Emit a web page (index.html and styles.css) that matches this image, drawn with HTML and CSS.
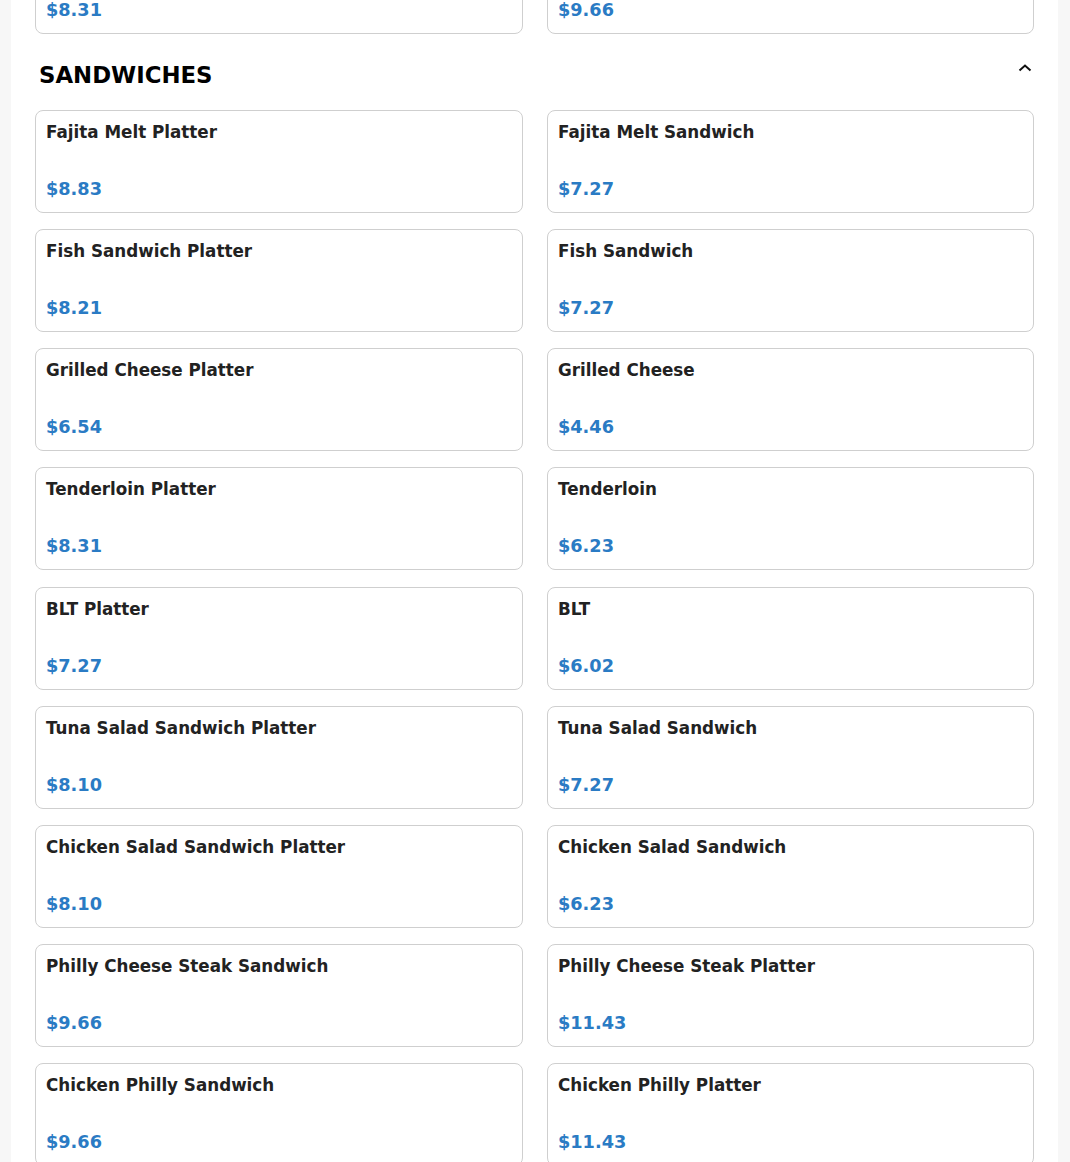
FILE: index.html
```html
<!DOCTYPE html>
<html>
<head>
<meta charset="utf-8">
<link rel="stylesheet" href="styles.css">
</head>
<body>
<div class="page">
  <div class="grid prev">
    <div class="card"><div class="name">Previous Item</div><div class="price">$8.31</div></div>
    <div class="card"><div class="name">Previous Item</div><div class="price">$9.66</div></div>
  </div>
  <section class="section">
    <div class="section-head">
      <h2>SANDWICHES</h2>
      <svg class="chev" width="14" height="10" viewBox="0 0 14 10"><path d="M1.5 7.5 L7 2.5 L12.5 7.5" fill="none" stroke="#111" stroke-width="2"/></svg>
    </div>
    <div class="grid">
      <div class="card"><div class="name">Fajita Melt Platter</div><div class="price">$8.83</div></div>
      <div class="card"><div class="name">Fajita Melt Sandwich</div><div class="price">$7.27</div></div>
      <div class="card"><div class="name">Fish Sandwich Platter</div><div class="price">$8.21</div></div>
      <div class="card"><div class="name">Fish Sandwich</div><div class="price">$7.27</div></div>
      <div class="card"><div class="name">Grilled Cheese Platter</div><div class="price">$6.54</div></div>
      <div class="card"><div class="name">Grilled Cheese</div><div class="price">$4.46</div></div>
      <div class="card"><div class="name">Tenderloin Platter</div><div class="price">$8.31</div></div>
      <div class="card"><div class="name">Tenderloin</div><div class="price">$6.23</div></div>
      <div class="card"><div class="name">BLT Platter</div><div class="price">$7.27</div></div>
      <div class="card"><div class="name">BLT</div><div class="price">$6.02</div></div>
      <div class="card"><div class="name">Tuna Salad Sandwich Platter</div><div class="price">$8.10</div></div>
      <div class="card"><div class="name">Tuna Salad Sandwich</div><div class="price">$7.27</div></div>
      <div class="card"><div class="name">Chicken Salad Sandwich Platter</div><div class="price">$8.10</div></div>
      <div class="card"><div class="name">Chicken Salad Sandwich</div><div class="price">$6.23</div></div>
      <div class="card"><div class="name">Philly Cheese Steak Sandwich</div><div class="price">$9.66</div></div>
      <div class="card"><div class="name">Philly Cheese Steak Platter</div><div class="price">$11.43</div></div>
      <div class="card"><div class="name">Chicken Philly Sandwich</div><div class="price">$9.66</div></div>
      <div class="card"><div class="name">Chicken Philly Platter</div><div class="price">$11.43</div></div>
    </div>
  </section>
</div>
</body>
</html>
```
FILE: styles.css
```css
html, body {
  margin: 0;
  padding: 0;
  background: #f7f7f7;
  font-family: "DejaVu Sans", sans-serif;
  height: 1162px;
  overflow: hidden;
}
.page {
  margin: 0 12px 0 11px;
  background: #fff;
  padding: 0 24px 40px 24px;
  min-height: 1400px;
}
.grid {
  display: grid;
  grid-template-columns: 488fr 487fr;
  column-gap: 24px;
  row-gap: 16.125px;
}
.prev {
  margin-top: -69px;
}
.card {
  border: 1px solid #cfcfcf;
  border-radius: 8px;
  padding: 10px 10px 12px 10px;
  height: 103px;
  box-sizing: border-box;
  display: flex;
  flex-direction: column;
  justify-content: space-between;
}
.name {
  font-weight: bold;
  font-size: 16.75px;
  color: #222;
  line-height: 22px;
}
.price {
  font-weight: bold;
  font-size: 17.7px;
  color: #2a7bc4;
  line-height: 22px;
}
.section-head {
  display: flex;
  justify-content: space-between;
  align-items: center;
  padding: 26px 0 20px 4px;
}
.section-head h2 {
  margin: 0;
  font-size: 22.8px;
  letter-spacing: 0;
  font-weight: bold;
  color: #000;
  line-height: 30px;
}
.chev {
  margin-right: 2px;
  margin-top: -14px;
}
```
